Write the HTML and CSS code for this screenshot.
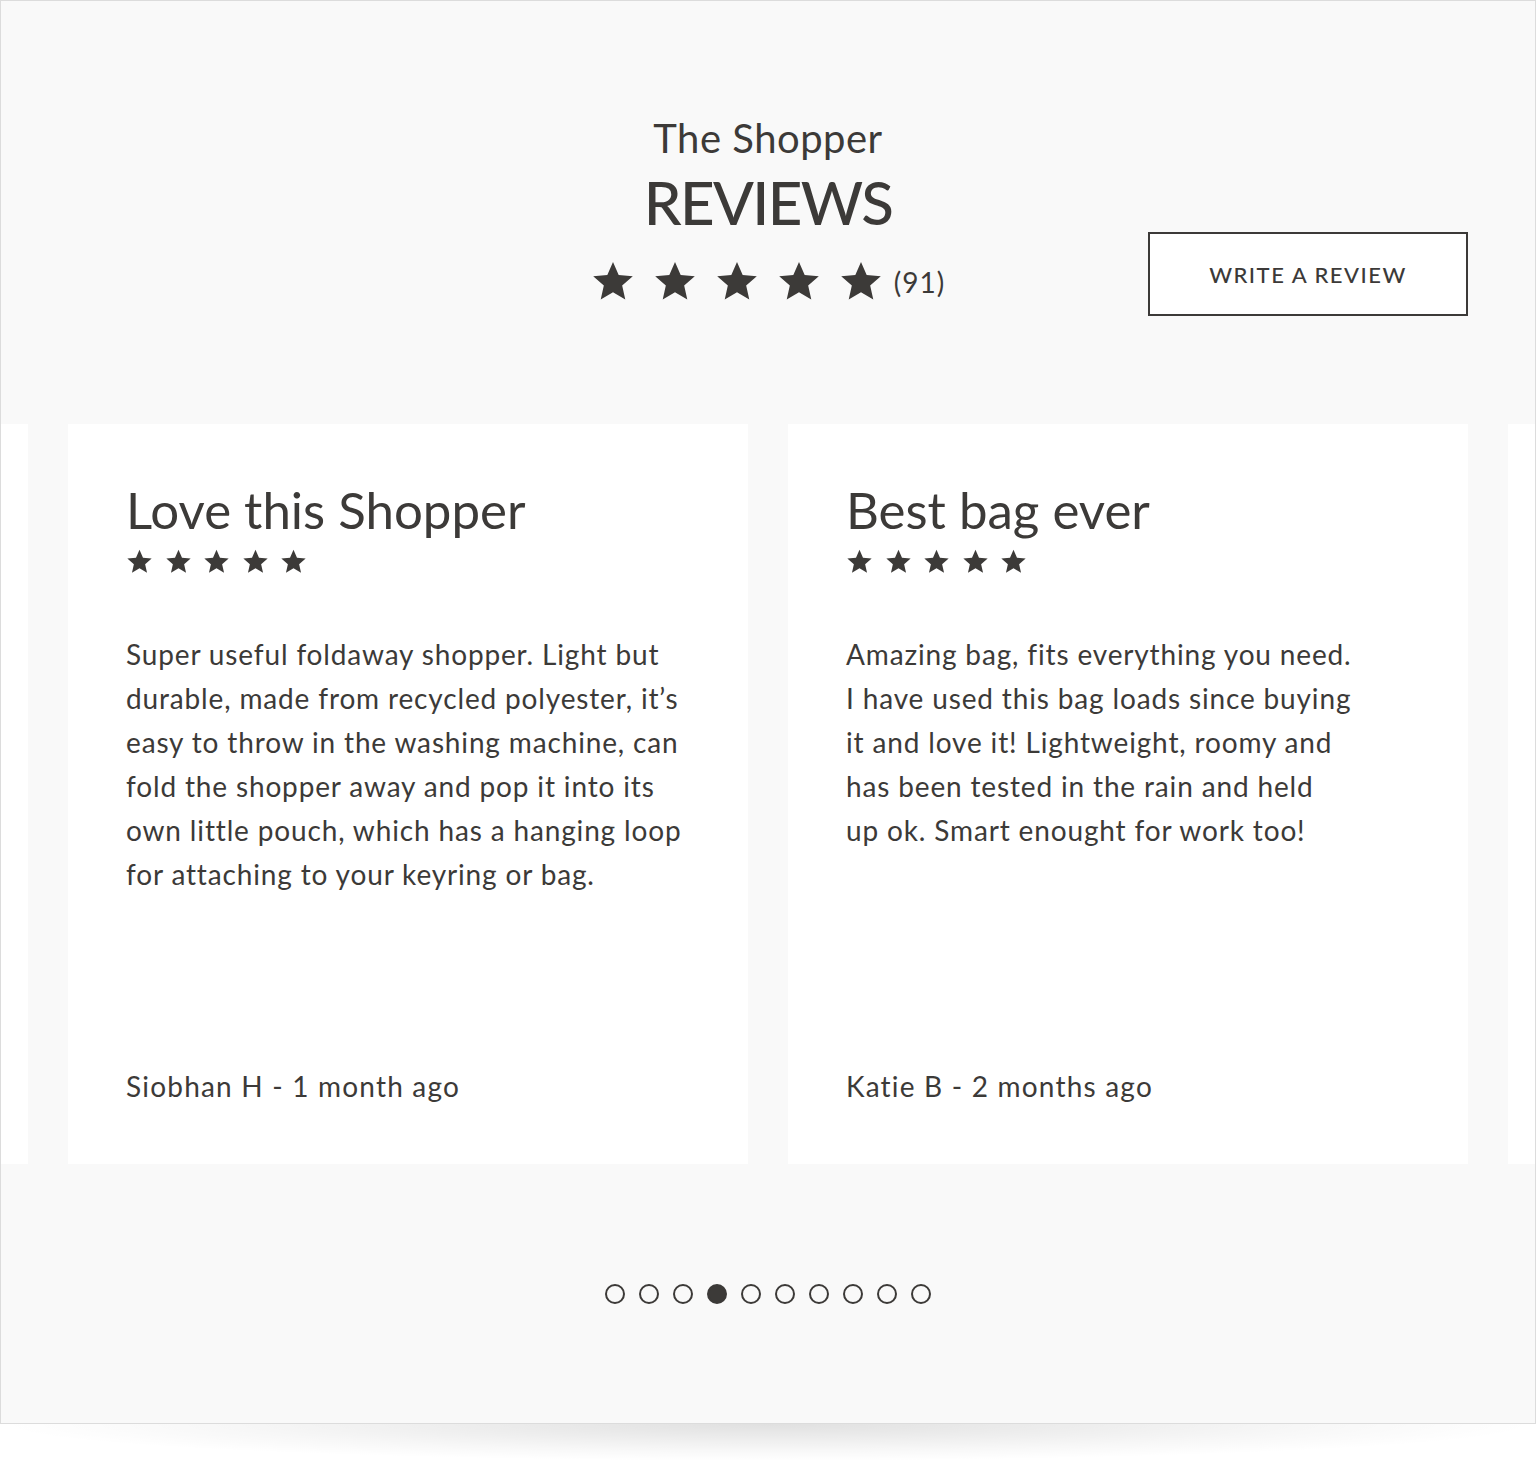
FILE: index.html
```html
<!DOCTYPE html>
<html lang="en">
<head>
<meta charset="utf-8">
<title>The Shopper Reviews</title>
<link rel="stylesheet" href="styles.css">
</head>
<body>
<svg class="defs" width="0" height="0" aria-hidden="true">
  <defs>
    <symbol id="star" viewBox="0 0 24 24"><path d="M12 1.6l3.1 7.1 7.7.7-5.8 5.1 1.7 7.6L12 18.1 5.3 22.1 7 14.5 1.2 9.4l7.7-.7z"/></symbol>
  </defs>
</svg>
<main class="panel">
  <header class="head">
    <div class="head-spacer"></div>
    <div class="head-center">
      <div class="kicker">The Shopper</div>
      <h1 class="title">REVIEWS</h1>
      <div class="rating">
        <svg class="star-lg"><use href="#star"/></svg>
        <svg class="star-lg"><use href="#star"/></svg>
        <svg class="star-lg"><use href="#star"/></svg>
        <svg class="star-lg"><use href="#star"/></svg>
        <svg class="star-lg"><use href="#star"/></svg>
        <span class="count">(91)</span>
      </div>
    </div>
    <div class="head-action">
      <button class="write-btn" type="button">WRITE A REVIEW</button>
    </div>
  </header>

  <section class="carousel">
    <div class="track">
      <article class="card"></article>
      <article class="card">
        <h2 class="card-title">Love this Shopper</h2>
        <div class="card-stars">
          <svg class="star-sm"><use href="#star"/></svg>
          <svg class="star-sm"><use href="#star"/></svg>
          <svg class="star-sm"><use href="#star"/></svg>
          <svg class="star-sm"><use href="#star"/></svg>
          <svg class="star-sm"><use href="#star"/></svg>
        </div>
        <p class="card-body">Super useful foldaway shopper. Light but<br>durable, made from recycled polyester, it’s<br>easy to throw in the washing machine, can<br>fold the shopper away and pop it into its<br>own little pouch, which has a hanging loop<br>for attaching to your keyring or bag.</p>
        <div class="card-author">Siobhan H - 1 month ago</div>
      </article>
      <article class="card">
        <h2 class="card-title">Best bag ever</h2>
        <div class="card-stars">
          <svg class="star-sm"><use href="#star"/></svg>
          <svg class="star-sm"><use href="#star"/></svg>
          <svg class="star-sm"><use href="#star"/></svg>
          <svg class="star-sm"><use href="#star"/></svg>
          <svg class="star-sm"><use href="#star"/></svg>
        </div>
        <p class="card-body">Amazing bag, fits everything you need.<br>I have used this bag loads since buying<br>it and love it! Lightweight, roomy and<br>has been tested in the rain and held<br>up ok. Smart enought for work too!</p>
        <div class="card-author">Katie B - 2 months ago</div>
      </article>
      <article class="card"></article>
    </div>
  </section>

  <nav class="dots" aria-label="Review pages">
    <span class="dot"></span>
    <span class="dot"></span>
    <span class="dot"></span>
    <span class="dot active"></span>
    <span class="dot"></span>
    <span class="dot"></span>
    <span class="dot"></span>
    <span class="dot"></span>
    <span class="dot"></span>
    <span class="dot"></span>
  </nav>
</main>
<div class="shadow"></div>
</body>
</html>
```

FILE: styles.css
```css
* { box-sizing: border-box; }

html, body {
  margin: 0;
  padding: 0;
  background: #ffffff;
}

body {
  font-family: "Lato", "Liberation Sans", sans-serif;
  color: #3c3a38;
  width: 1536px;
}

.defs { position: absolute; width: 0; height: 0; overflow: hidden; }

.panel {
  width: 1536px;
  height: 1424px;
  background: #f9f9f9;
  border: 1px solid #dcdcdc;
  display: flex;
  flex-direction: column;
}

.head {
  display: grid;
  grid-template-columns: 1fr auto 1fr;
  align-items: start;
  padding: 113px 67px 0 67px;
  height: 423px;
  flex: 0 0 auto;
}

.head-center {
  display: flex;
  flex-direction: column;
  align-items: center;
}

.kicker {
  font-size: 40px;
  line-height: 48px;
  letter-spacing: 0.5px;
  font-weight: 400;
}

.title {
  margin: 8px 0 0;
  font-size: 60px;
  line-height: 64px;
  font-weight: 500;
  letter-spacing: -1.6px;
}

.rating {
  display: flex;
  align-items: center;
  gap: 18px;
  margin-top: 25px;
  height: 44px;
}

.star-lg {
  width: 44px;
  height: 44px;
  fill: #3c3a38;
}

.count {
  font-size: 28px;
  letter-spacing: 1px;
  margin-left: -7px;
  padding-top: 2px;
}

.head-action {
  justify-self: end;
  margin-top: 118px;
}

.write-btn {
  display: block;
  width: 320px;
  height: 84px;
  background: #ffffff;
  border: 2px solid #3c3a38;
  color: #3c3a38;
  font-family: "Lato", "Liberation Sans", sans-serif;
  font-size: 22px;
  font-weight: 500;
  letter-spacing: 1.5px;
  padding: 0;
}

.carousel {
  overflow: hidden;
}

.track {
  display: flex;
  justify-content: center;
  gap: 40px;
}

.card {
  flex: 0 0 680px;
  height: 740px;
  background: #ffffff;
  padding: 54px 58px 56px 58px;
  display: flex;
  flex-direction: column;
}

.card-title {
  margin: 0;
  font-size: 51px;
  line-height: 64px;
  font-weight: 400;
}

.card-stars {
  display: flex;
  gap: 11.5px;
  margin-top: 6px;
}

.star-sm {
  width: 27px;
  height: 27px;
  fill: #3c3a38;
}

.card-body {
  margin: 57px 0 0;
  font-size: 28px;
  line-height: 44px;
  letter-spacing: 0.85px;
  white-space: nowrap;
}

.card-author {
  margin-top: auto;
  font-size: 28px;
  line-height: 44px;
  letter-spacing: 1.2px;
}

.dots {
  display: flex;
  justify-content: center;
  gap: 14px;
  margin-top: 120px;
}

.dot {
  width: 20px;
  height: 20px;
  border: 2px solid #3c3a38;
  border-radius: 50%;
}

.dot.active { background: #3c3a38; }

.shadow {
  width: 1536px;
  height: 37px;
  background: radial-gradient(ellipse 50% 100% at 50% 0%, rgba(0,0,0,0.12), rgba(0,0,0,0.03) 70%, rgba(0,0,0,0) 100%);
}
```
